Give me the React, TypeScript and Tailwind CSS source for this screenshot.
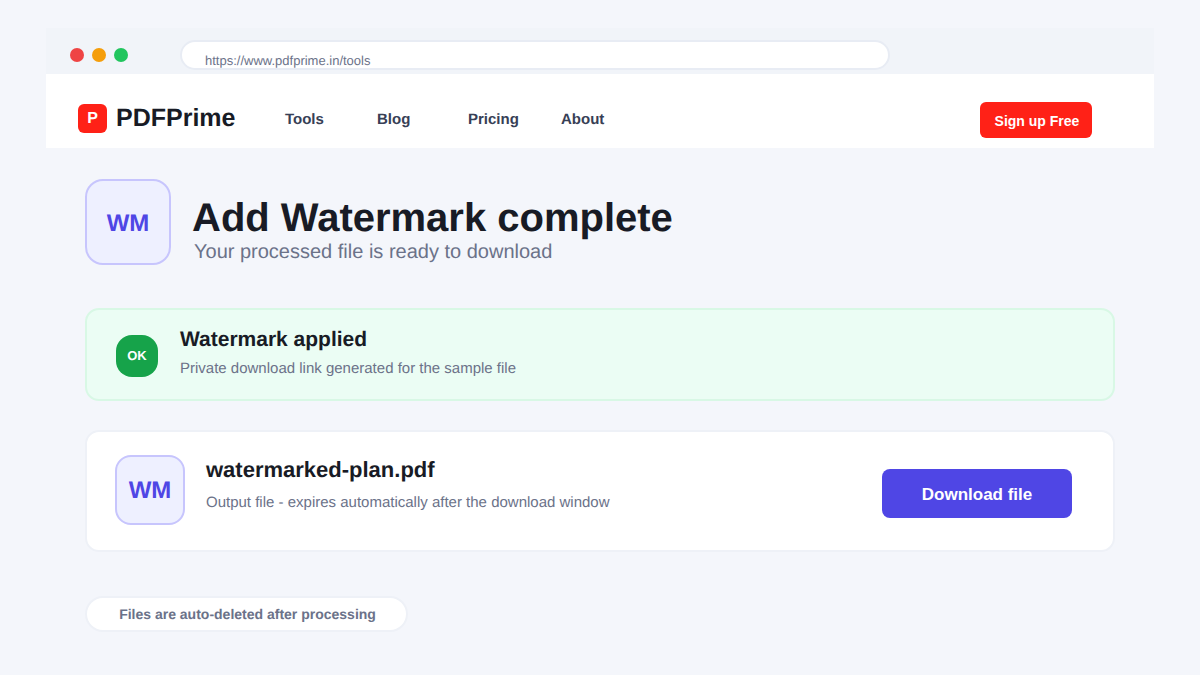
export default function App() {
  const font = { fontFamily: '"Liberation Sans", Arial, sans-serif' };
  return (
    <div style={font} className="antialiased [text-rendering:geometricPrecision] w-[1200px] h-[675px] overflow-hidden bg-[#f4f6fb] pt-[28px]">
      <div className="mx-[46px] h-[46px] bg-[#f1f4f9] flex pt-[12px]">
        <div className="flex gap-[8px] pl-[24px] pt-[8px] items-start">
          <span className="w-[14px] h-[14px] rounded-full bg-[#ef4444]" />
          <span className="w-[14px] h-[14px] rounded-full bg-[#f59e0b]" />
          <span className="w-[14px] h-[14px] rounded-full bg-[#22c55e]" />
        </div>
        <div className="ml-[52px] w-[710px] h-[30px] rounded-[15px] bg-white border-2 border-[#e8ecf4] pl-[23px] pt-[11px] text-[13px] leading-[16px] text-[#6b7289]">
          https://www.pdfprime.in/tools
        </div>
      </div>
      <div className="mx-[46px] h-[74px] bg-white flex items-center pl-[32px] relative">
        <div className="w-[29px] h-[29px] rounded-[6px] bg-[#ff2117] flex items-center justify-center text-white font-bold text-[16px] mt-[15px]">P</div>
        <div className="ml-[9px] text-[25px] font-bold text-[#181b25] mt-[16px] w-[169px]">PDFPrime</div>
        <nav className="flex text-[15px] font-bold text-[#374056] mt-[18px]">
          <span className="w-[92px]">Tools</span>
          <span className="w-[91px]">Blog</span>
          <span className="w-[93px]">Pricing</span>
          <span>About</span>
        </nav>
        <button className="ml-auto mr-[62px] mt-[18px] pl-[2px] pt-[2px] w-[112px] h-[36px] rounded-[6px] bg-[#ff2117] text-white font-bold text-[14px]">Sign up Free</button>
      </div>
      <main className="mx-[85px] mt-[31px]">
        <div className="flex">
          <div className="w-[86px] h-[86px] rounded-[18px] bg-[#eef0ff] border-2 border-[#c7c5fd] flex items-center justify-center text-[#4f46e5] font-bold text-[24px] pt-[3px]">WM</div>
          <div className="ml-[21px]">
            <h1 className="text-[40px] leading-[48px] font-bold text-[#181b25] mt-[15px]">Add Watermark complete</h1>
            <p className="ml-[2px] text-[20px] leading-[24px] text-[#6b7289] -mt-[2px]">Your processed file is ready to download</p>
          </div>
        </div>
        <div className="mt-[43px] h-[93px] rounded-[14px] bg-[#ebfdf4] border-2 border-[#d8f8e5] flex items-center pl-[29px]">
          <div className="w-[42px] h-[42px] rounded-[16px] bg-[#16a34a] flex items-center justify-center text-white font-bold text-[13px] mt-[3px]">OK</div>
          <div className="ml-[22px] -mt-[4px]">
            <div className="text-[21px] leading-[26px] font-bold text-[#181b25]">Watermark applied</div>
            <div className="mt-[7px] text-[15px] leading-[18px] text-[#6b7289]">Private download link generated for the sample file</div>
          </div>
        </div>
        <div className="mt-[29px] h-[122px] rounded-[14px] bg-white border-2 border-[#eef1f7] flex items-center pl-[28px] pr-[41px]">
          <div className="w-[70px] h-[70px] rounded-[16px] bg-[#eef0ff] border-2 border-[#c7c5fd] flex items-center justify-center text-[#4f46e5] font-bold text-[24px] -mt-[2px] pt-[2px]">WM</div>
          <div className="ml-[21px] -mt-[13px]">
            <div className="text-[22px] leading-[26px] font-bold text-[#181b25]">watermarked-plan.pdf</div>
            <div className="mt-[11px] text-[15px] leading-[18px] text-[#6b7289]">Output file - expires automatically after the download window</div>
          </div>
          <button className="ml-auto w-[190px] h-[49px] rounded-[8px] bg-[#4f46e5] text-white font-bold text-[17px] mt-[4px] pt-[4px]">Download file</button>
        </div>
        <div className="mt-[44px] w-[323px] h-[36px] rounded-[18px] bg-white border-2 border-[#eef1f7] flex items-center justify-center text-[14px] font-bold text-[#6b7289] pl-[2px]">Files are auto-deleted after processing</div>
      </main>
    </div>
  );
}
